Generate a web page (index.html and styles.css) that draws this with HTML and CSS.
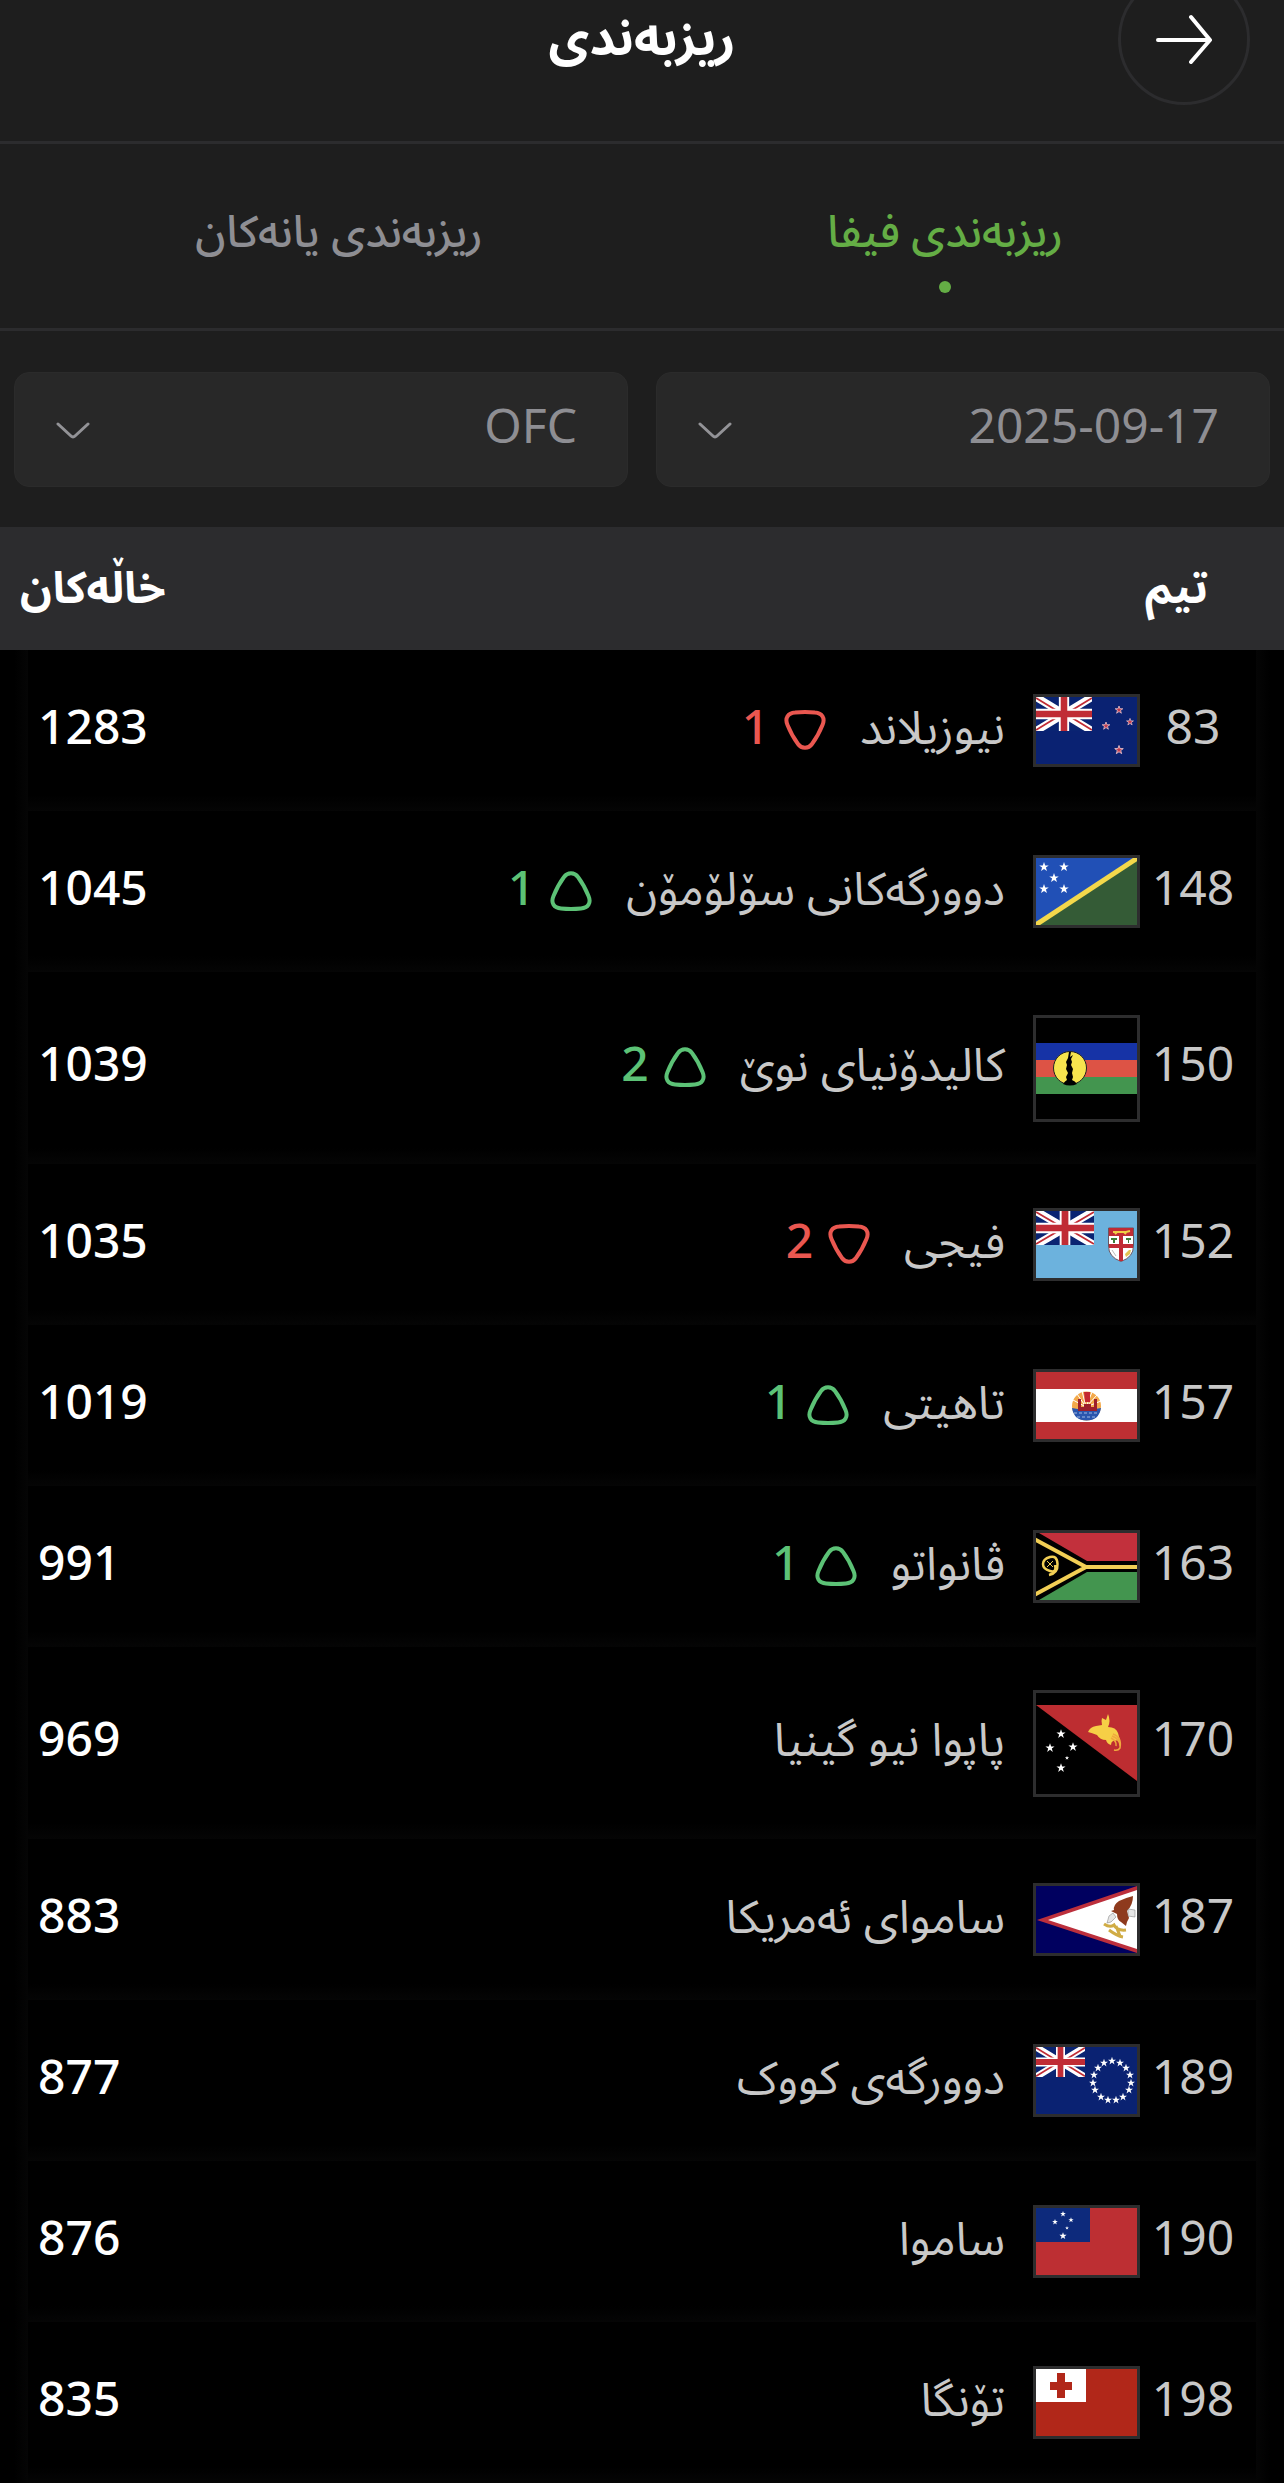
FILE: index.html
```
<!DOCTYPE html>
<html lang="ckb" dir="rtl">

<head>
    <meta charset="UTF-8">
    <meta name="viewport" content="width=device-width, initial-scale=1.0">
    <title>ریزبەندی</title>
    <link rel="stylesheet" href="styles.css">
</head>

<body>
    <!-- shared shapes -->
    <svg class="shapes" width="0" height="0" aria-hidden="true">
        <defs>
            <path id="star" d="M0-10 2.4-3.1 9.5-3.1 3.8 1.2 5.9 8.1 0 3.8-5.9 8.1-3.8 1.2-9.5-3.1-2.4-3.1Z" />
            <symbol id="union" viewBox="0 0 60 36" preserveAspectRatio="none">
                <path fill="#0a2472" d="M0 0h60v36H0z" />
                <path stroke="#fff" stroke-width="8" d="M0 0l60 36M60 0L0 36" />
                <path stroke="#c02c35" stroke-width="2" d="M0 1l30 18M30 17l30 18M60 1L30 19M30 17L0 35" />
                <path stroke="#fff" stroke-width="11" d="M30 0v36M0 18h60" />
                <path stroke="#c02c35" stroke-width="7" d="M30 0v36M0 18h60" />
            </symbol>
            <symbol id="up" viewBox="0 0 42 40">
                <path fill="none" stroke="#5cc276" stroke-width="4" stroke-linejoin="round" d="M14 6C17.500 1 24.500 1 28 6Q34 14 38.500 25C41.500 32 38 37 31 37.500Q21 38.500 11 37.500C4 37 .5 32 3.500 25Q8 14 14 6Z" />
            </symbol>
            <symbol id="down" viewBox="0 0 42 40">
                <path fill="none" stroke="#ea5750" stroke-width="4" stroke-linejoin="round" d="M14 34C17.500 39 24.500 39 28 34Q34 26 38.500 15C41.500 8 38 3 31 2.500Q21 1.500 11 2.500C4 3 .5 8 3.500 15Q8 26 14 34Z" />
            </symbol>
        </defs>
    </svg>

    <div class="top">
        <header class="header">
            <h1>ریزبەندی</h1>
            <button type="button" class="back" aria-label="گەڕانەوە">
                <svg width="56" height="50" viewBox="0 0 56 50" fill="none" stroke="#fff" stroke-width="4" stroke-linecap="round" stroke-linejoin="round">
                    <path d="M2 26h51M35 3l19 23-19 22" />
                </svg>
            </button>
        </header>

        <nav class="tabs">
            <a href="#" class="active">ریزبەندی فیفا</a>
            <a href="#">ریزبەندی یانەکان</a>
        </nav>

        <form class="filters">
            <div class="field">
                <select aria-label="بەروار">
                    <option>2025-09-17</option>
                </select>
                <svg width="34" height="18" viewBox="0 0 34 18" fill="none" stroke="#939397" stroke-width="3" stroke-linecap="round">
                    <path d="M2 2l13 12q2 2 4 0L32 2" />
                </svg>
            </div>
            <div class="field">
                <select aria-label="کۆنفیدراسیۆن">
                    <option>OFC</option>
                </select>
                <svg width="34" height="18" viewBox="0 0 34 18" fill="none" stroke="#939397" stroke-width="3" stroke-linecap="round">
                    <path d="M2 2l13 12q2 2 4 0L32 2" />
                </svg>
            </div>
        </form>
    </div>

    <table class="ranking">
        <thead>
            <tr>
                <th class="team-head">تیم</th>
                <th class="points-head">خاڵەکان</th>
            </tr>
        </thead>
        <tbody>
            <tr>
                <td>
                    <div class="team">
                        <span class="rank">83</span>
                        <svg class="flag" viewBox="0 0 101 67">
                            <path fill="#0a2272" d="M0 0h101v67H0z" />
                            <use href="#union" width="56" height="34" />
                            <g fill="#c63b4c" stroke="#e9c3cc" stroke-width="2">
                                <use href="#star" transform="translate(83 13) scale(.4)" />
                                <use href="#star" transform="translate(94 25) scale(.36)" />
                                <use href="#star" transform="translate(70 29) scale(.4)" />
                                <use href="#star" transform="translate(83 53) scale(.45)" />
                            </g>
                        </svg>
                        <span class="name">نیوزیلاند</span>
                        <span class="change down"><svg class="arrow"><use href="#down" /></svg>1</span>
                    </div>
                </td>
                <td class="points">1283</td>
            </tr>
            <tr>
                <td>
                    <div class="team">
                        <span class="rank">148</span>
                        <svg class="flag" viewBox="0 0 101 67">
                            <path fill="#2150b6" d="M0 0h101v67H0z" />
                            <path fill="#345b36" d="M101 0v67H0z" />
                            <path stroke="#f4d84b" stroke-width="5" d="M-2 68L103-1" />
                            <g fill="#fff">
                                <use href="#star" transform="translate(8 9) scale(.5)" />
                                <use href="#star" transform="translate(28 9) scale(.5)" />
                                <use href="#star" transform="translate(18 20) scale(.5)" />
                                <use href="#star" transform="translate(8 31) scale(.5)" />
                                <use href="#star" transform="translate(28 31) scale(.5)" />
                            </g>
                        </svg>
                        <span class="name">دوورگەکانی سۆلۆمۆن</span>
                        <span class="change up"><svg class="arrow"><use href="#up" /></svg>1</span>
                    </div>
                </td>
                <td class="points">1045</td>
            </tr>
            <tr class="tall">
                <td>
                    <div class="team">
                        <span class="rank">150</span>
                        <svg class="flag square" viewBox="0 0 101 101">
                            <path fill="#1633a6" d="M0 25h101v17H0z" />
                            <path fill="#dd5345" d="M0 42h101v17H0z" />
                            <path fill="#43954f" d="M0 59h101v17H0z" />
                            <circle cx="34" cy="50" r="16.500" fill="#f7e44e" stroke="#222" stroke-width="1" />
                            <path d="M33 34h2l-1 5 3-2-2 4 1 3-1 3 2 4-1 4 1 4-1 3q3 1 5 4-7 3-14 0 2-3 4-4l-1-3 2-4-2-4 1-4-1-3 2-4z" />
                        </svg>
                        <span class="name">کالیدۆنیای نوێ</span>
                        <span class="change up"><svg class="arrow"><use href="#up" /></svg>2</span>
                    </div>
                </td>
                <td class="points">1039</td>
            </tr>
            <tr>
                <td>
                    <div class="team">
                        <span class="rank">152</span>
                        <svg class="flag" viewBox="0 0 101 67">
                            <path fill="#6cb2dd" d="M0 0h101v67H0z" />
                            <use href="#union" width="58" height="34" />
                            <path fill="#fff" stroke="#6b5560" stroke-width="1" d="M72.500 17h25v18q0 11-12.500 15.500Q72.500 46 72.500 35z" />
                            <path fill="#c12b35" d="M73 17h24v8H73zM83 25h4v25h-4zM73 33h24v4H73z" />
                            <path fill="none" stroke="#f0cf45" stroke-width="2" d="M77 21h13l4-1M79 23l2-2M90 23l-2-2" />
                            <path fill="#3f7d3a" d="M75 27h6v2h-2v3h-2v-3h-2zM90 27h5v2h-2v3h-1v-3h-2z" />
                            <path fill="#e3c352" d="M89 43l4-4h2l-1 4-4 3z" />
                            <path stroke="#bbb" d="M76 39l4 6" />
                        </svg>
                        <span class="name">فیجی</span>
                        <span class="change down"><svg class="arrow"><use href="#down" /></svg>2</span>
                    </div>
                </td>
                <td class="points">1035</td>
            </tr>
            <tr>
                <td>
                    <div class="team">
                        <span class="rank">157</span>
                        <svg class="flag" viewBox="0 0 101 67">
                            <path fill="#fff" d="M0 0h101v67H0z" />
                            <path fill="#bd2f33" d="M0 0h101v17H0zM0 50h101v17H0z" />
                            <circle cx="50.500" cy="34" r="14.500" fill="#f3a94a" />
                            <path stroke="#fff" d="M50 35L37 28M50 35L41 22M50 35L46 19M50 35L56 20M50 35L61 23M50 35L65 29" />
                            <path fill="#2a56ae" d="M36 36q14 3 29 0-2 12.500-14.500 12.500T36 36z" />
                            <path fill="none" stroke="#9db8e6" stroke-dasharray="3 2" d="M38 41h25M41 45h19" />
                            <path fill="#9c1f2c" d="M42 27h3v8h3v-3h7v3h3v-8h3v12H42z" />
                            <path fill="#c4272f" d="M48 20h6v10h-5z" />
                        </svg>
                        <span class="name">تاهیتی</span>
                        <span class="change up"><svg class="arrow"><use href="#up" /></svg>1</span>
                    </div>
                </td>
                <td class="points">1019</td>
            </tr>
            <tr>
                <td>
                    <div class="team">
                        <span class="rank">163</span>
                        <svg class="flag" viewBox="0 0 101 67">
                            <path d="M0 0h101v67H0z" />
                            <path fill="#c2303c" d="M3 0h98v28H51z" />
                            <path fill="#43954f" d="M3 67h98V39H51z" />
                            <path fill="none" stroke="#f2cf55" stroke-width="4" d="M-2 6l52 28h51M50 34L-2 62" />
                            <path fill="none" stroke="#f2cf55" stroke-width="2.500" d="M13 42q9-2 8.500-11T14 24 7 31t7 7 5-6" />
                            <path stroke="#f2cf55" stroke-width="1" d="M11 28l6 6M17 28l-6 6" />
                        </svg>
                        <span class="name">ڤانواتو</span>
                        <span class="change up"><svg class="arrow"><use href="#up" /></svg>1</span>
                    </div>
                </td>
                <td class="points">991</td>
            </tr>
            <tr class="tall">
                <td>
                    <div class="team">
                        <span class="rank">170</span>
                        <svg class="flag square" viewBox="0 0 101 101">
                            <path fill="#bd2d31" d="M0 12h101v76z" />
                            <g fill="#fff">
                                <use href="#star" transform="translate(25 41) scale(.48)" />
                                <use href="#star" transform="translate(14 55) scale(.48)" />
                                <use href="#star" transform="translate(37 54) scale(.48)" />
                                <use href="#star" transform="translate(31 65) scale(.22)" />
                                <use href="#star" transform="translate(25 75) scale(.48)" />
                            </g>
                            <path fill="#f6cf46" d="M52 39q2-5 8-6l6-1q-1-4 0-7l4 2 2-6q3 7 0 13 8 0 10 6l2 7-7 1q-2 1-2 4-4-1-5-5-6 0-9-5-5-2-9-3z" />
                            <path fill="none" stroke="#f0a83e" stroke-width="1.500" d="M76 43q8 3 8 10M77 41q9 3 7 14-2 3-6 2M75 45q6 3 5 8" />
                        </svg>
                        <span class="name">پاپوا نیو گینیا</span>
                    </div>
                </td>
                <td class="points">969</td>
            </tr>
            <tr>
                <td>
                    <div class="team">
                        <span class="rank">187</span>
                        <svg class="flag" viewBox="0 0 101 67">
                            <path fill="#00005f" d="M0 0h101v67H0z" />
                            <path fill="#bc2f3c" d="M1 34L101 0v67z" />
                            <path fill="#fff" d="M12 34l89-30v59z" />
                            <path fill="#8e3a1d" d="M97 10q-8 2-14 5-6 4-5 9l-3 1 6 3q0 6 4 8l5 4q1-5 3-8l-2-7q6-6 6-15z" />
                            <path fill="#e6e6e6" stroke="#777" stroke-width=".5" d="M73 30l4-3 3 4-5 5-4 1zM92 23l7 1v7l-7-1z" />
                            <path fill="none" stroke="#d0ac45" stroke-width="3" d="M68 38q6 4 10 1 3 6 12 5M73 44q8 6 14 7M80 40l4 10" />
                        </svg>
                        <span class="name">ساموای ئەمریکا</span>
                    </div>
                </td>
                <td class="points">883</td>
            </tr>
            <tr>
                <td>
                    <div class="team">
                        <span class="rank">189</span>
                        <svg class="flag" viewBox="0 0 101 67">
                            <path fill="#0a2272" d="M0 0h101v67H0z" />
                            <use href="#union" width="49" height="30" />
                            <g fill="#fff">
                                <use href="#star" transform="translate(76 14) scale(.42)" />
                                <use href="#star" transform="translate(84 16) scale(.42)" />
                                <use href="#star" transform="translate(90 21) scale(.42)" />
                                <use href="#star" transform="translate(94 28) scale(.42)" />
                                <use href="#star" transform="translate(95 36) scale(.42)" />
                                <use href="#star" transform="translate(93 43) scale(.42)" />
                                <use href="#star" transform="translate(87 50) scale(.42)" />
                                <use href="#star" transform="translate(80 53) scale(.42)" />
                                <use href="#star" transform="translate(72 53) scale(.42)" />
                                <use href="#star" transform="translate(65 50) scale(.42)" />
                                <use href="#star" transform="translate(59 43) scale(.42)" />
                                <use href="#star" transform="translate(57 36) scale(.42)" />
                                <use href="#star" transform="translate(58 28) scale(.42)" />
                                <use href="#star" transform="translate(62 21) scale(.42)" />
                                <use href="#star" transform="translate(68 16) scale(.42)" />
                            </g>
                        </svg>
                        <span class="name">دوورگەی کووک</span>
                    </div>
                </td>
                <td class="points">877</td>
            </tr>
            <tr>
                <td>
                    <div class="team">
                        <span class="rank">190</span>
                        <svg class="flag" viewBox="0 0 101 67">
                            <path fill="#bd2f33" d="M0 0h101v67H0z" />
                            <path fill="#0d2a7c" d="M0 0h54v34H0z" />
                            <g fill="#fff">
                                <use href="#star" transform="translate(27 6) scale(.3)" />
                                <use href="#star" transform="translate(19 14) scale(.3)" />
                                <use href="#star" transform="translate(35 12) scale(.28)" />
                                <use href="#star" transform="translate(31 20) scale(.2)" />
                                <use href="#star" transform="translate(27 28) scale(.38)" />
                            </g>
                        </svg>
                        <span class="name">ساموا</span>
                    </div>
                </td>
                <td class="points">876</td>
            </tr>
            <tr>
                <td>
                    <div class="team">
                        <span class="rank">198</span>
                        <svg class="flag" viewBox="0 0 101 67">
                            <path fill="#b12719" d="M0 0h101v67H0z" />
                            <path fill="#fff" d="M0 0h50v33H0z" />
                            <path fill="#b12719" d="M21 4h8v9h7v8h-7v8h-8v-8h-7v-8h7z" />
                        </svg>
                        <span class="name">تۆنگا</span>
                    </div>
                </td>
                <td class="points">835</td>
            </tr>
        </tbody>
    </table>
</body>

</html>
```
FILE: styles.css
```
* {
    margin: 0;
    padding: 0;
    box-sizing: border-box;
    font-family: "Noto Sans", "Noto Sans Arabic", sans-serif;
}

body {
    background-color: #000;
    color: #fff;
    font-size: 48px;
    line-height: 64px;
    overflow-x: hidden;
}

.shapes {
    position: absolute;
}

.top {
    background-color: #1e1e1e;
    overflow: hidden;
}

/* the header is scrolled partly under the top edge */
.header {
    display: grid;
    grid-template-columns: 132px 1fr 132px;
    align-items: center;
    margin-top: -27px;
    padding: 0 34px 36px;
    border-bottom: 3px solid #2c2c2e;
}

.header h1 {
    grid-column: 2;
    grid-row: 1;
    text-align: center;
    font-size: 50px;
    font-weight: 700;
    padding-bottom: 6px;
}

.back {
    grid-column: 1;
    grid-row: 1;
    width: 132px;
    height: 132px;
    border: 3px solid #2c2c2e;
    border-radius: 50%;
    background: none;
    cursor: pointer;
}

.back svg {
    display: block;
    margin: auto;
}

.tabs {
    display: flex;
    padding: 0 36px;
    border-bottom: 3px solid #2c2c2e;
}

.tabs a {
    flex: 1;
    display: flex;
    flex-direction: column;
    align-items: center;
    height: 184px;
    padding-top: 54px;
    color: #8e8e93;
    font-size: 44px;
    font-weight: 500;
    text-decoration: none;
}

.tabs .active {
    color: #64ad45;
}

.tabs .active::after {
    content: "";
    width: 12px;
    height: 12px;
    margin-top: 19px;
    border-radius: 50%;
    background-color: #64ad45;
}

.filters {
    display: flex;
    gap: 28px;
    padding: 41px 14px 40px;
}

.field {
    flex: 1;
    position: relative;
}

.field select {
    display: block;
    width: 100%;
    height: 115px;
    padding: 0 50px 10px;
    border: 1px solid #2b2b2b;
    border-radius: 15px;
    background-color: #282828;
    color: #8e8e93;
    font-size: 48px;
    appearance: none;
    cursor: pointer;
}

.field svg {
    position: absolute;
    left: 42px;
    top: 50px;
    pointer-events: none;
}

.ranking {
    width: 100%;
    border-collapse: collapse;
    background: linear-gradient(to right, #000 14px, #050505 28px, #000 28px calc(100% - 28px), #050505 calc(100% - 28px), #000 calc(100% - 14px));
}

.ranking thead tr {
    height: 123px;
    background-color: #2c2c2e;
}

.ranking th {
    font-size: 44px;
    font-weight: 700;
    padding-bottom: 6px;
}

.team-head {
    text-align: right;
    padding-right: 76px;
}

.points-head {
    text-align: left;
    padding-left: 20px;
}

.ranking tbody tr {
    height: 161px;
    background: linear-gradient(to bottom, transparent calc(100% - 16px), #050505) center / calc(100% - 56px) 100% no-repeat;
}

.ranking tbody .tall {
    height: 192px;
}

.team {
    display: flex;
    align-items: center;
    padding-right: 48px;
    color: #c8c8c8;
}

.rank {
    width: 86px;
    padding-bottom: 10px;
    text-align: center;
}

.flag {
    width: 107px;
    height: 73px;
    margin: 0 10px 0 28px;
    border: 3px solid #2d2d2e;
}

.square {
    height: 107px;
}

.name {
    padding-bottom: 10px;
    font-size: 46px;
    white-space: nowrap;
}

.change {
    display: flex;
    align-items: center;
    gap: 15px;
    margin-right: 34px;
    padding-bottom: 10px;
    font-weight: 500;
}

.arrow {
    width: 42px;
    height: 40px;
    margin-top: 8px;
}

.up {
    color: #5cc276;
}

.down {
    color: #ea5750;
}

.ranking .points {
    padding: 0 38px 10px 38px;
    text-align: left;
    font-weight: 500;
}
```
